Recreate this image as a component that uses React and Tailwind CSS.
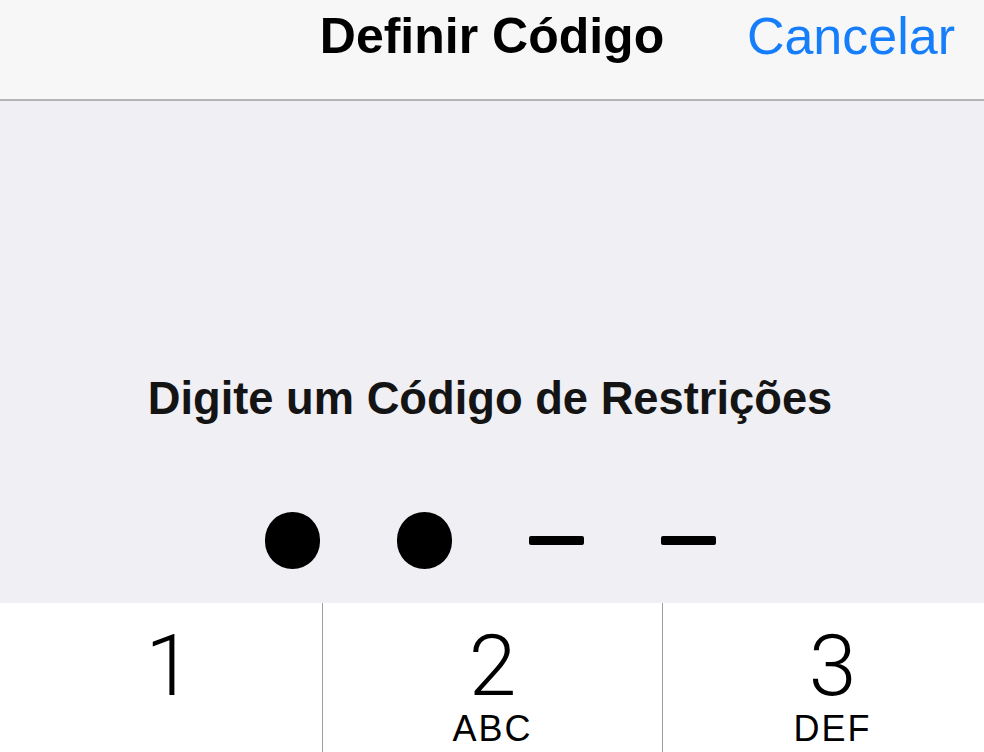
const keys = [
  { digit: "1", letters: "" },
  { digit: "2", letters: "ABC" },
  { digit: "3", letters: "DEF" },
];

// 4-slot passcode, first two filled
const slots = [true, true, false, false];

export default function App() {
  return (
    <div className="w-[984px] h-[752px] overflow-hidden bg-white" style={{ fontFamily: '"Liberation Sans", Arial, sans-serif' }}>
      <div className="w-[1020px] -ml-[18px] flex flex-col">
        {/* Nav bar */}
        <div className="relative h-[101px] bg-[#f7f7f7] border-b-2 border-[#b4b4b4] flex justify-center pt-[11px]">
          <span className="text-[50px] leading-none font-bold text-black">Definir Código</span>
          <span className="absolute right-[47px] top-[10px] text-[52px] leading-none text-[#167efb]">Cancelar</span>
        </div>

        {/* Prompt + code slots */}
        <div className="h-[502px] bg-[#efeff4] flex flex-col items-center pt-[275px] pr-[4px]">
          <span className="text-[45.3px] leading-none font-bold text-[#141414]">Digite um Código de Restrições</span>
          <div className="mt-[91px] flex items-center gap-[77px] h-[57px]">
            {slots.map((filled, i) =>
              filled ? (
                <div key={i} className="w-[55px] h-[57px] rounded-full bg-black" />
              ) : (
                <div key={i} className="w-[55px] h-[9px] rounded-[2px] bg-black" />
              )
            )}
          </div>
        </div>

        {/* Keypad */}
        <div className="grid grid-cols-3 h-[149px] bg-white">
          {keys.map((k, i) => (
            <div
              key={k.digit}
              className={`flex flex-col items-center pt-[27px] ${i > 0 ? "border-l border-[#9e9e9e]" : ""}`}
            >
              <span
                className={`text-[86px] leading-[72px] font-light text-black ${k.digit === "1" ? "pl-[34px]" : ""}`}
                style={{ fontFamily: 'Roboto, "Liberation Sans", sans-serif' }}
              >
                {k.digit}
              </span>
              {k.letters && (
                <span className="mt-[9px] text-[36px] leading-none text-black tracking-[2px]">{k.letters}</span>
              )}
            </div>
          ))}
        </div>
      </div>
    </div>
  );
}
